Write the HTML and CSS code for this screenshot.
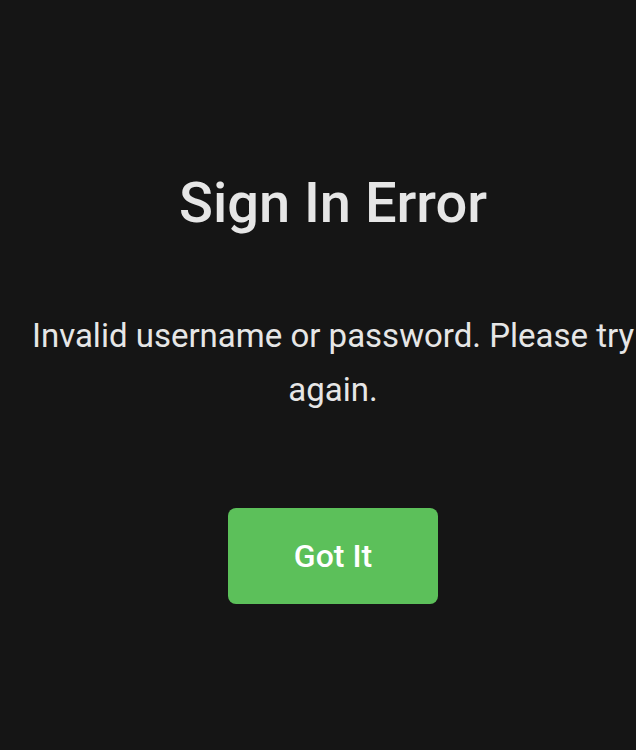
FILE: index.html
```html
<!DOCTYPE html>
<html lang="en">
<head>
<meta charset="utf-8">
<title>Sign In Error</title>
<link rel="stylesheet" href="styles.css">
</head>
<body>
<main class="dialog">
  <h1 class="dialog-title">Sign In Error</h1>
  <p class="dialog-message">Invalid username or password. Please try again.</p>
  <button class="dialog-button" type="button">Got It</button>
</main>
</body>
</html>
```
FILE: styles.css
```css
html, body {
  margin: 0;
  padding: 0;
  background: #151515;
  height: 100%;
}
body {
  font-family: Roboto, "Noto Sans", sans-serif;
  color: #e6e6e6;
  overflow: hidden;
}
.dialog {
  display: flex;
  flex-direction: column;
  align-items: center;
  padding: 170px 0 0 30px;
  text-align: center;
}
.dialog-title {
  margin: 0;
  font-size: 56px;
  font-weight: 500;
  line-height: 66px;
  color: #e6e6e6;
}
.dialog-message {
  margin: 73px 0 0;
  font-size: 33px;
  line-height: 54px;
  font-weight: 400;
  color: #e6e6e6;
}
.dialog-button {
  margin-top: 91px;
  width: 210px;
  height: 96px;
  border: none;
  border-radius: 8px;
  background: #5cc05a;
  color: #ffffff;
  font-family: Roboto, "Noto Sans", sans-serif;
  font-size: 32px;
  font-weight: 500;
  cursor: pointer;
}
```
